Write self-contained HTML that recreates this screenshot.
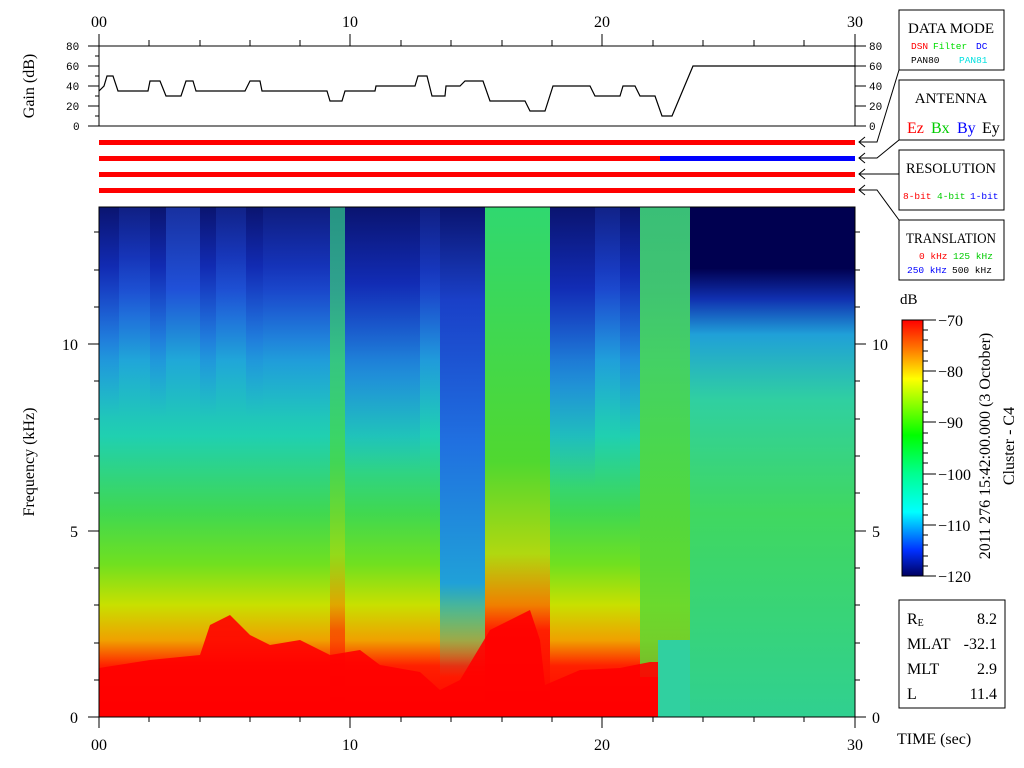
<!DOCTYPE html>
<html><head><meta charset="utf-8"><style>
html,body{margin:0;padding:0;background:#fff;width:1024px;height:768px;overflow:hidden}
svg{display:block}
.s{font-family:"Liberation Serif",serif;}
.m{font-family:"Liberation Mono",monospace;}
</style></head><body>
<svg width="1024" height="768" viewBox="0 0 1024 768" xmlns="http://www.w3.org/2000/svg">
<defs>
<linearGradient id="base" x1="0" y1="0" x2="0" y2="1">
<stop offset="0" stop-color="#1830a0"/><stop offset="0.16" stop-color="#2050d8"/>
<stop offset="0.3" stop-color="#20a8d8"/><stop offset="0.45" stop-color="#20d0b0"/>
<stop offset="0.6" stop-color="#40d850"/><stop offset="0.7" stop-color="#70e020"/>
<stop offset="0.78" stop-color="#c8e000"/><stop offset="0.85" stop-color="#f0a000"/>
<stop offset="0.9" stop-color="#ff2000"/><stop offset="1" stop-color="#ff0000"/>
</linearGradient>
<linearGradient id="dark" x1="0" y1="0" x2="0" y2="1">
<stop offset="0" stop-color="#0a1470" stop-opacity="1"/><stop offset="0.2" stop-color="#1028b0" stop-opacity="0.9"/>
<stop offset="0.45" stop-color="#2070e0" stop-opacity="0.5"/><stop offset="0.7" stop-color="#20a0e0" stop-opacity="0"/>
</linearGradient>
<linearGradient id="deep" x1="0" y1="0" x2="0" y2="1">
<stop offset="0" stop-color="#0a1470"/><stop offset="0.2" stop-color="#1a40c8"/>
<stop offset="0.5" stop-color="#2070e0"/><stop offset="0.8" stop-color="#20a0d8"/><stop offset="1" stop-color="#20c0a0" stop-opacity="0"/>
</linearGradient>
<linearGradient id="grn" x1="0" y1="0" x2="0" y2="1">
<stop offset="0" stop-color="#30d870"/><stop offset="0.5" stop-color="#50d830"/>
<stop offset="0.68" stop-color="#b0d810"/><stop offset="0.78" stop-color="#f08000"/><stop offset="0.83" stop-color="#ff2000"/><stop offset="1" stop-color="#ff0000"/>
</linearGradient>
<linearGradient id="gcol" x1="0" y1="0" x2="0" y2="1">
<stop offset="0" stop-color="#40d870"/><stop offset="0.5" stop-color="#50d840"/><stop offset="1" stop-color="#60d830"/>
</linearGradient>
<linearGradient id="rgt" x1="0" y1="0" x2="0" y2="1">
<stop offset="0" stop-color="#000050"/><stop offset="0.12" stop-color="#000050"/>
<stop offset="0.18" stop-color="#1030b0"/><stop offset="0.25" stop-color="#20a0d8"/>
<stop offset="0.38" stop-color="#30d0a0"/><stop offset="0.6" stop-color="#40d860"/><stop offset="1" stop-color="#30d090"/>
</linearGradient>
<linearGradient id="cb" x1="0" y1="0" x2="0" y2="1">
<stop offset="0" stop-color="#ff0000"/><stop offset="0.12" stop-color="#ff8000"/>
<stop offset="0.23" stop-color="#ffff00"/><stop offset="0.45" stop-color="#00ff00"/>
<stop offset="0.6" stop-color="#00ff90"/><stop offset="0.75" stop-color="#00ffff"/>
<stop offset="0.9" stop-color="#0030ff"/><stop offset="1" stop-color="#000060"/>
</linearGradient>
</defs>

<!-- spectrogram -->
<rect x="99" y="207" width="591" height="510" fill="url(#base)"/>
<g>
<rect x="99" y="207" width="20" height="300" fill="url(#dark)"/>
<rect x="119" y="207" width="31" height="250" fill="url(#dark)" opacity="0.6"/>
<rect x="150" y="207" width="16" height="300" fill="url(#dark)"/>
<rect x="200" y="207" width="16" height="300" fill="url(#dark)"/>
<rect x="216" y="207" width="30" height="250" fill="url(#dark)" opacity="0.5"/>
<rect x="246" y="207" width="17" height="300" fill="url(#dark)"/>
<rect x="263" y="207" width="67" height="300" fill="url(#dark)" opacity="0.7"/>
<rect x="345" y="207" width="75" height="380" fill="url(#dark)"/>
<rect x="420" y="207" width="20" height="320" fill="url(#dark)" opacity="0.6"/>
<rect x="440" y="207" width="45" height="470" fill="url(#deep)"/>
<rect x="550" y="207" width="45" height="400" fill="url(#dark)"/>
<rect x="595" y="207" width="25" height="300" fill="url(#dark)" opacity="0.5"/>
<rect x="620" y="207" width="20" height="340" fill="url(#dark)"/>
</g>
<rect x="330" y="207" width="15" height="510" fill="url(#grn)" opacity="0.6"/>
<rect x="485" y="207" width="65" height="510" fill="url(#grn)"/>
<rect x="640" y="207" width="50" height="470" fill="url(#gcol)" opacity="0.85"/>
<!-- red bottom -->
<polygon fill="#ff0000" opacity="0.9" points="99,668 150,660 200,655 210,625 230,615 250,635 270,645 300,640 330,655 360,650 380,665 420,672 440,690 460,680 478,650 490,630 510,620 530,610 540,640 545,685 580,670 620,668 650,662 658,662 658,717 99,717"/>
<rect x="658" y="640" width="32" height="77" fill="#30d0a0"/>
<rect x="690" y="207" width="165" height="510" fill="url(#rgt)"/>
<rect x="690" y="207" width="165" height="62" fill="#000050"/>
<rect x="99" y="207" width="756" height="510" fill="none" stroke="#000" stroke-width="1"/>

<!-- gain plot -->
<rect x="99" y="46" width="756" height="80" fill="none" stroke="#000"/>
<polyline fill="none" stroke="#000" stroke-width="1.2" points="99,91 104,86 107,76 113,76 118,91 148,91 150,81 160,81 166,96 181,96 186,81 193,81 196,91 245,91 250,81 260,81 262,91 327,91 330,101 342,101 345,91 375,91 376,86 415,86 418,76 427,76 432,96 445,96 446,86 460,86 465,81 483,81 490,101 525,101 530,111 545,111 553,86 590,86 595,96 620,96 623,86 635,86 640,96 655,96 662,116 672,116 693,66 855,66"/>
<g stroke="#000">
<line x1="88" y1="46" x2="99" y2="46"/><line x1="88" y1="66" x2="99" y2="66"/><line x1="88" y1="86" x2="99" y2="86"/><line x1="88" y1="106" x2="99" y2="106"/><line x1="88" y1="126" x2="99" y2="126"/>
<line x1="95" y1="56" x2="99" y2="56"/><line x1="95" y1="76" x2="99" y2="76"/><line x1="95" y1="96" x2="99" y2="96"/><line x1="95" y1="116" x2="99" y2="116"/>
<line x1="855" y1="46" x2="866" y2="46"/><line x1="855" y1="66" x2="866" y2="66"/><line x1="855" y1="86" x2="866" y2="86"/><line x1="855" y1="106" x2="866" y2="106"/><line x1="855" y1="126" x2="866" y2="126"/>
<line x1="99" y1="34" x2="99" y2="46"/><line x1="350" y1="34" x2="350" y2="46"/><line x1="602" y1="34" x2="602" y2="46"/><line x1="855" y1="34" x2="855" y2="46"/>
<line x1="149" y1="40" x2="149" y2="46"/><line x1="200" y1="40" x2="200" y2="46"/><line x1="250" y1="40" x2="250" y2="46"/><line x1="300" y1="40" x2="300" y2="46"/>
<line x1="401" y1="40" x2="401" y2="46"/><line x1="451" y1="40" x2="451" y2="46"/><line x1="502" y1="40" x2="502" y2="46"/><line x1="552" y1="40" x2="552" y2="46"/>
<line x1="653" y1="40" x2="653" y2="46"/><line x1="703" y1="40" x2="703" y2="46"/><line x1="754" y1="40" x2="754" y2="46"/><line x1="804" y1="40" x2="804" y2="46"/>
<line x1="88" y1="717" x2="99" y2="717"/><line x1="88" y1="531" x2="99" y2="531"/><line x1="88" y1="344" x2="99" y2="344"/>
<line x1="855" y1="717" x2="866" y2="717"/><line x1="855" y1="531" x2="866" y2="531"/><line x1="855" y1="344" x2="866" y2="344"/>
<line x1="94" y1="680" x2="99" y2="680"/><line x1="94" y1="643" x2="99" y2="643"/><line x1="94" y1="605" x2="99" y2="605"/><line x1="94" y1="568" x2="99" y2="568"/><line x1="94" y1="493" x2="99" y2="493"/><line x1="94" y1="456" x2="99" y2="456"/><line x1="94" y1="419" x2="99" y2="419"/><line x1="94" y1="381" x2="99" y2="381"/><line x1="94" y1="307" x2="99" y2="307"/><line x1="94" y1="270" x2="99" y2="270"/><line x1="94" y1="232" x2="99" y2="232"/>
<line x1="855" y1="680" x2="860" y2="680"/><line x1="855" y1="643" x2="860" y2="643"/><line x1="855" y1="605" x2="860" y2="605"/><line x1="855" y1="568" x2="860" y2="568"/><line x1="855" y1="493" x2="860" y2="493"/><line x1="855" y1="456" x2="860" y2="456"/><line x1="855" y1="419" x2="860" y2="419"/><line x1="855" y1="381" x2="860" y2="381"/><line x1="855" y1="307" x2="860" y2="307"/><line x1="855" y1="270" x2="860" y2="270"/><line x1="855" y1="232" x2="860" y2="232"/>
<line x1="99" y1="717" x2="99" y2="728"/><line x1="350" y1="717" x2="350" y2="728"/><line x1="602" y1="717" x2="602" y2="728"/><line x1="855" y1="717" x2="855" y2="728"/>
<line x1="149" y1="717" x2="149" y2="722"/><line x1="200" y1="717" x2="200" y2="722"/><line x1="250" y1="717" x2="250" y2="722"/><line x1="300" y1="717" x2="300" y2="722"/><line x1="401" y1="717" x2="401" y2="722"/><line x1="451" y1="717" x2="451" y2="722"/><line x1="502" y1="717" x2="502" y2="722"/><line x1="552" y1="717" x2="552" y2="722"/><line x1="653" y1="717" x2="653" y2="722"/><line x1="703" y1="717" x2="703" y2="722"/><line x1="754" y1="717" x2="754" y2="722"/><line x1="804" y1="717" x2="804" y2="722"/>
</g>
<g class="m" font-size="11" fill="#000">
<text x="66" y="50">80</text><text x="66" y="70">60</text><text x="66" y="90">40</text><text x="66" y="110">20</text><text x="73" y="130">0</text>
<text x="869" y="50">80</text><text x="869" y="70">60</text><text x="869" y="90">40</text><text x="869" y="110">20</text><text x="869" y="130">0</text>
</g>
<g class="s" font-size="16" fill="#000">
<text x="99" y="27" text-anchor="middle">00</text><text x="350" y="27" text-anchor="middle">10</text><text x="602" y="27" text-anchor="middle">20</text><text x="855" y="27" text-anchor="middle">30</text>
<text x="99" y="750" text-anchor="middle">00</text><text x="350" y="750" text-anchor="middle">10</text><text x="602" y="750" text-anchor="middle">20</text><text x="855" y="750" text-anchor="middle">30</text>
<text x="78" y="723" text-anchor="end">0</text><text x="78" y="537" text-anchor="end">5</text><text x="78" y="350" text-anchor="end">10</text>
<text x="872" y="723">0</text><text x="872" y="537">5</text><text x="872" y="350">10</text>
<text transform="translate(34,86) rotate(-90)" text-anchor="middle">Gain (dB)</text>
<text transform="translate(34,462) rotate(-90)" text-anchor="middle">Frequency (kHz)</text>
<text x="897" y="744">TIME (sec)</text>
</g>

<rect x="99" y="140" width="756" height="5" fill="#ff0000"/>
<rect x="99" y="156" width="561" height="5" fill="#ff0000"/>
<rect x="660" y="156" width="195" height="5" fill="#0000ff"/>
<rect x="99" y="172" width="756" height="5" fill="#ff0000"/>
<rect x="99" y="188" width="756" height="5" fill="#ff0000"/>
<g stroke="#000" fill="none">
<polyline points="865,137 859,142 865,147"/><polyline points="865,153 859,158 865,163"/><polyline points="865,169 859,174 865,179"/><polyline points="865,185 859,190 865,195"/>
<polyline points="859,142 877,142 899,70"/><polyline points="859,158 877,158 899,140"/><polyline points="859,174 899,174"/><polyline points="859,190 877,190 899,220"/>
<rect x="899" y="10" width="105" height="60"/><rect x="899" y="80" width="105" height="60"/><rect x="899" y="150" width="105" height="60"/><rect x="899" y="220" width="105" height="60"/>
<rect x="899" y="600" width="106" height="108"/>
</g>
<g class="s" font-size="15" fill="#000" text-anchor="middle">
<text x="951" y="33" textLength="86" lengthAdjust="spacingAndGlyphs">DATA MODE</text><text x="951" y="103">ANTENNA</text><text x="951" y="173" textLength="90" lengthAdjust="spacingAndGlyphs">RESOLUTION</text><text x="951" y="243" textLength="90" lengthAdjust="spacingAndGlyphs">TRANSLATION</text>
</g>
<g class="m" font-size="9.5">
<text x="911" y="49" fill="#ff0000">DSN</text><text x="933" y="49" fill="#00dd00">Filter</text><text x="976" y="49" fill="#0000ff">DC</text>
<text x="911" y="63" fill="#000">PAN80</text><text x="959" y="63" fill="#00e0e0">PAN81</text>
<text x="903" y="199" fill="#ff0000">8-bit</text><text x="937" y="199" fill="#00cc00">4-bit</text><text x="970" y="199" fill="#0000ff">1-bit</text>
<text x="919" y="259" fill="#ff0000">0 kHz</text><text x="953" y="259" fill="#00cc00">125 kHz</text>
<text x="907" y="273" fill="#0000ff">250 kHz</text><text x="952" y="273" fill="#000">500 kHz</text>
</g>
<g class="s" font-size="16">
<text x="907" y="133" fill="#ff0000">Ez</text><text x="931" y="133" fill="#00cc00">Bx</text><text x="957" y="133" fill="#0000ff">By</text><text x="982" y="133" fill="#000">Ey</text>
</g>
<text x="900" y="304" class="s" font-size="15">dB</text>
<rect x="902" y="320" width="21" height="256" fill="url(#cb)" stroke="#000"/>
<g stroke="#000">
<line x1="923" y1="320" x2="936" y2="320"/><line x1="923" y1="371" x2="936" y2="371"/><line x1="923" y1="422" x2="936" y2="422"/><line x1="923" y1="474" x2="936" y2="474"/><line x1="923" y1="525" x2="936" y2="525"/><line x1="923" y1="576" x2="936" y2="576"/>
<line x1="923" y1="330" x2="928" y2="330"/><line x1="923" y1="340" x2="928" y2="340"/><line x1="923" y1="351" x2="928" y2="351"/><line x1="923" y1="361" x2="928" y2="361"/>
<line x1="923" y1="381" x2="928" y2="381"/><line x1="923" y1="392" x2="928" y2="392"/><line x1="923" y1="402" x2="928" y2="402"/><line x1="923" y1="412" x2="928" y2="412"/>
<line x1="923" y1="433" x2="928" y2="433"/><line x1="923" y1="443" x2="928" y2="443"/><line x1="923" y1="453" x2="928" y2="453"/><line x1="923" y1="463" x2="928" y2="463"/>
<line x1="923" y1="484" x2="928" y2="484"/><line x1="923" y1="494" x2="928" y2="494"/><line x1="923" y1="504" x2="928" y2="504"/><line x1="923" y1="515" x2="928" y2="515"/>
<line x1="923" y1="535" x2="928" y2="535"/><line x1="923" y1="545" x2="928" y2="545"/><line x1="923" y1="556" x2="928" y2="556"/><line x1="923" y1="566" x2="928" y2="566"/>
</g>
<g class="s" font-size="16" fill="#000">
<text x="938" y="326">−70</text><text x="938" y="377">−80</text><text x="938" y="428">−90</text><text x="938" y="480">−100</text><text x="938" y="531">−110</text><text x="938" y="582">−120</text>
<text transform="translate(990,446) rotate(-90)" text-anchor="middle">2011 276 15:42:00.000 (3 October)</text>
<text transform="translate(1014,446) rotate(-90)" text-anchor="middle">Cluster - C4</text>
<text x="907" y="624">R<tspan font-size="10" dy="2">E</tspan></text><text x="997" y="624" text-anchor="end">8.2</text>
<text x="907" y="649">MLAT</text><text x="997" y="649" text-anchor="end">-32.1</text>
<text x="907" y="674">MLT</text><text x="997" y="674" text-anchor="end">2.9</text>
<text x="907" y="699">L</text><text x="997" y="699" text-anchor="end">11.4</text>
</g>
</svg>
</body></html>
